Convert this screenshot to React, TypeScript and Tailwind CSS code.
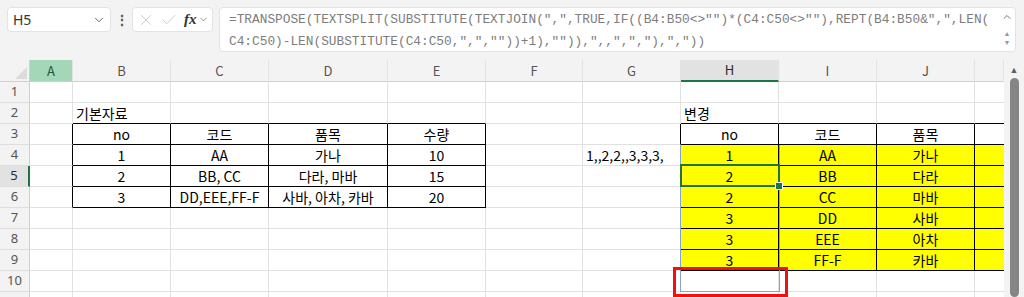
import { ChevronDown, ChevronUp, X, Check } from 'lucide-react';

const COLS = [30, 43, 98, 98, 119, 98, 97, 98, 98, 98, 98, 29];
// K is only partly on screen, its letter sits past the edge
const LETTERS = ['', 'A', 'B', 'C', 'D', 'E', 'F', 'G', 'H', 'I', 'J', ''];
const ROWS = [1, 2, 3, 4, 5, 6, 7, 8, 9, 10, 11];

type Cell = { text: string; left?: boolean };

const cells: Record<string, Cell> = {
    '2,2': { text: '기본자료', left: true },
    '2,8': { text: '변경', left: true },
    '3,2': { text: 'no' }, '3,3': { text: '코드' }, '3,4': { text: '품목' }, '3,5': { text: '수량' },
    '4,2': { text: '1' }, '4,3': { text: 'AA' }, '4,4': { text: '가나' }, '4,5': { text: '10' },
    '5,2': { text: '2' }, '5,3': { text: 'BB, CC' }, '5,4': { text: '다라, 마바' }, '5,5': { text: '15' },
    '6,2': { text: '3' }, '6,3': { text: 'DD,EEE,FF-F' }, '6,4': { text: '사바, 아차, 카바' }, '6,5': { text: '20' },
    '4,7': { text: '1,,2,2,,3,3,3,', left: true },
    '3,8': { text: 'no' }, '3,9': { text: '코드' }, '3,10': { text: '품목' },
    '4,8': { text: '1' }, '4,9': { text: 'AA' }, '4,10': { text: '가나' },
    '5,8': { text: '2' }, '5,9': { text: 'BB' }, '5,10': { text: '다라' },
    '6,8': { text: '2' }, '6,9': { text: 'CC' }, '6,10': { text: '마바' },
    '7,8': { text: '3' }, '7,9': { text: 'DD' }, '7,10': { text: '사바' },
    '8,8': { text: '3' }, '8,9': { text: 'EEE' }, '8,10': { text: '아차' },
    '9,8': { text: '3' }, '9,9': { text: 'FF-F' }, '9,10': { text: '카바' },
};

const inTable = (r: number, c: number) =>
    (r >= 3 && r <= 6 && c >= 2 && c <= 5) || (r >= 3 && r <= 9 && c >= 8 && c <= 11);

const isYellow = (r: number, c: number) => r >= 4 && r <= 9 && c >= 8 && c <= 11;

const LINE1 = '=TRANSPOSE(TEXTSPLIT(SUBSTITUTE(TEXTJOIN(",",TRUE,IF((B4:B50<>"")*(C4:C50<>""),REPT(B4:B50&",",LEN(';
const LINE2 = 'C4:C50)-LEN(SUBSTITUTE(C4:C50,",",""))+1),"")),",,",","),","))';

function FormulaBar() {
    return (
        <div className="h-[60px] bg-[#f3f3f3] flex items-start pt-[7px] pl-[7px] font-['Noto_Sans',sans-serif]">
            <div className="w-[104px] h-[25px] bg-white rounded-[4px] border border-[#e3e3e3] flex items-center justify-between pl-[5px] pr-[4px]">
                <span className="text-[14px] text-[#333]">H5</span>
                <ChevronDown size={14} strokeWidth={1.5} className="text-[#555]" />
            </div>
            <div className="w-[21px] h-[25px] flex items-center justify-center text-[#555] text-[14px] font-bold">⋮</div>
            <div className="w-[81px] h-[25px] bg-white rounded-[4px] border border-[#e3e3e3] flex items-center pl-[4px]">
                <X size={18} strokeWidth={1.2} className="text-[#c6c6c6]" />
                <Check size={18} strokeWidth={1.2} className="text-[#c6c6c6] ml-[5px]" />
                <span className="ml-[6px] font-['Liberation_Serif',serif] italic font-bold text-[15px] text-[#333] leading-none">fx</span>
                <ChevronDown size={11} strokeWidth={1.5} className="text-[#666] ml-[1px]" />
            </div>
            <div className="ml-[6px] w-[797px] h-[45px] bg-white rounded-[4px] border border-[#e3e3e3] flex">
                <div className="flex-1 pl-[9px] pt-[1px] font-['Liberation_Mono',monospace] text-[12.8px] leading-[22px] text-[#7d7d7d] whitespace-pre">
                    <div>{LINE1}</div>
                    <div>{LINE2}</div>
                </div>
                <div className="w-[16px] flex flex-col items-center pt-[3px] text-[#666]">
                    <ChevronUp size={12} strokeWidth={1.8} />
                    <span className="text-[7px] leading-[9px] mt-[6px] text-[#999]">▲</span>
                    <span className="text-[7px] leading-[9px] text-[#999]">▼</span>
                </div>
            </div>
        </div>
    );
}

function HeaderRow() {
    return (
        <div className="flex h-[22px]">
            {COLS.map((w, c) => {
                if (c === 0) {
                    return (
                        <div key={c} style={{ width: w }} className="shrink-0 h-full bg-[#f3f3f3] border-r border-b border-[#cfcfcf] flex items-end justify-end p-[2px]">
                            <svg width="12" height="12" viewBox="0 0 12 12">
                                <polygon points="12,0 12,12 0,12" fill="#dcdcdc" />
                            </svg>
                        </div>
                    );
                }
                const isA = c === 1;
                const isH = c === 8;
                const bg = isA ? 'bg-[#a3d7b8] text-[#27533a]' : isH ? 'bg-[#e2e2e2] text-[#2b2b2b]' : 'bg-[#f3f3f3] text-[#555]';
                const bottom = isH ? 'border-b-2 border-b-[#217346]' : 'border-b border-b-[#cfcfcf]';
                return (
                    <div key={c} style={{ width: w }} className={`shrink-0 h-full flex items-center justify-center text-[13px] border-r border-r-[#e2e2e2] ${bg} ${bottom}`}>
                        {LETTERS[c]}
                    </div>
                );
            })}
        </div>
    );
}

function GridRow({ r }: { r: number }) {
    return (
        <div className="flex h-[21px]">
            {COLS.map((w, c) => {
                if (c === 0) {
                    const sel = r === 5;
                    return (
                        <div
                            key={c}
                            style={{ width: w }}
                            className={`shrink-0 h-full flex items-center justify-center text-[13px] font-['Noto_Sans',sans-serif] border-b border-b-[#dedede] ${sel ? 'bg-[#e2e2e2] text-[#2b2b2b] border-r-2 border-r-[#217346]' : 'bg-[#f3f3f3] text-[#555] border-r border-r-[#cfcfcf]'}`}
                        >
                            {r <= 10 ? r : ''}
                        </div>
                    );
                }
                const rightBlack = c < 11 && (inTable(r, c) || inTable(r, c + 1));
                const bottomBlack = inTable(r, c) || inTable(r + 1, c);
                const right = c === 11 ? 'border-r-0' : rightBlack ? 'border-r border-r-black' : 'border-r border-r-[#e1e1e1]';
                const bottom = bottomBlack ? 'border-b border-b-black' : 'border-b border-b-[#e1e1e1]';
                const cell = cells[`${r},${c}`];
                const bg = isYellow(r, c) ? 'bg-[#ffff00]' : 'bg-white';
                return (
                    <div
                        key={c}
                        style={{ width: w }}
                        className={`shrink-0 h-full flex items-center px-[3px] whitespace-nowrap text-[14px] text-black ${bg} ${right} ${bottom} ${cell?.left ? 'justify-start' : 'justify-center'}`}
                    >
                        {cell?.text}
                    </div>
                );
            })}
        </div>
    );
}

export default function App() {
    return (
        <div className="w-[1024px] h-[297px] overflow-hidden bg-[#f3f3f3]">
            <FormulaBar />
            <div className="flex h-[237px]">
                <div className="relative w-[1004px] overflow-hidden font-['Noto_Sans_CJK_KR','Noto_Sans',sans-serif]">
                    <HeaderRow />
                    {ROWS.map((r) => (
                        <GridRow key={r} r={r} />
                    ))}

                    {/* spill range */}
                    <div className="absolute left-[680px] top-[85px] w-[100px] h-[147px] border-x border-b border-[#86a3cf]" />

                    {/* active cell */}
                    <div className="absolute left-[680px] top-[104px] w-[100px] h-[23px] border-2 border-[#217346]" />
                    <div className="absolute left-[776px] top-[123px] w-[6px] h-[6px] bg-[#217346] outline outline-1 outline-white" />

                    {/* highlight box */}
                    <div className="absolute left-[673px] top-[207px] w-[115px] h-[30px] border-[3px] border-[#ee1111]" />
                </div>
                <div className="w-[20px] bg-[#f3f3f3] flex flex-col items-center pt-[5px]">
                    <span className="text-[9px] leading-[10px] text-[#606060]">▲</span>
                    <div className="mt-[3px] w-[9px] flex-1 rounded-full bg-[#858585]" />
                </div>
            </div>
        </div>
    );
}
